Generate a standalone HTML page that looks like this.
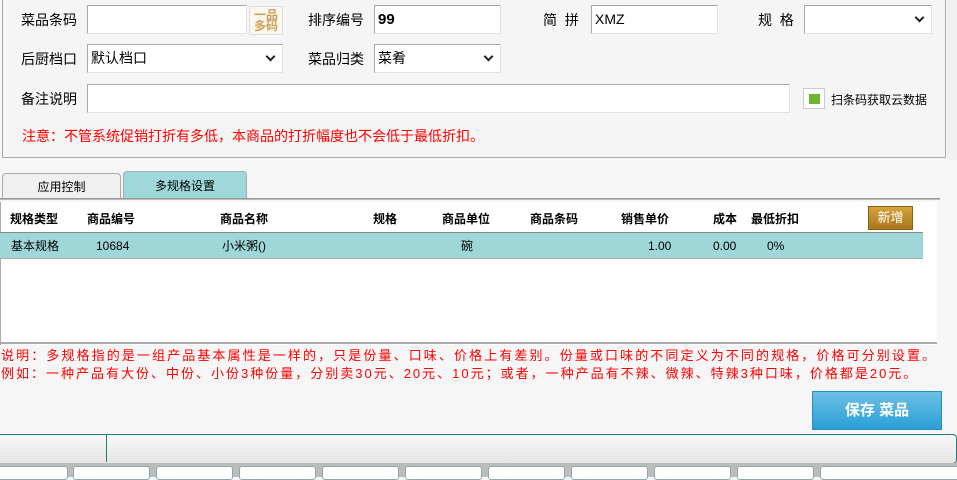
<!DOCTYPE html>
<html><head><meta charset="utf-8"><style>
*{margin:0;padding:0;box-sizing:border-box}
body{width:957px;height:477px;overflow:hidden;background:#f6f6f6;font-family:"Liberation Sans","Noto Sans CJK SC",sans-serif;font-size:14px;color:#000;position:relative}
.a{position:absolute}
.lbl{position:absolute;font-size:14px;line-height:16px}
.inp{position:absolute;background:#fff;border:1px solid #e2e2e2;border-top-color:#a8a8a8;border-left-color:#a8a8a8;height:29px;font-size:14px;line-height:27px;padding-left:3px}
.chev{position:absolute;right:8px;top:8px;width:7px;height:7px;border-right:2px solid #222;border-bottom:2px solid #222;transform:rotate(45deg)}
.th{position:absolute;top:212px;font-size:12px;font-weight:bold;line-height:14px}
.td{position:absolute;top:239px;font-size:12px;line-height:14px}
.red{position:absolute;color:#f00;font-size:13px;line-height:15px;white-space:nowrap}
.btn{position:absolute;top:466px;height:14px;background:#fff;border:1px solid #8aa;border-radius:3px}
</style></head><body>
<div class="a" style="left:2px;top:-2px;width:944px;height:160px;border:1px solid #a9a9a9;background:#f5f5f5"></div>
<div class="a" style="left:947px;top:0;width:10px;height:160px;background:#f0f0f0"></div>

<div class="lbl" style="left:21px;top:12px">菜品条码</div>
<div class="inp" style="left:87px;top:5px;width:160px"></div>
<div class="a" style="left:249px;top:6px;width:34px;height:29px;background:#fbf6ee;border:1px solid #ddd;color:#c9a15b;font-size:12px;line-height:11px;text-align:center;padding-top:3px;font-weight:bold">一品<br>多码</div>
<div class="lbl" style="left:308px;top:12px">排序编号</div>
<div class="inp" style="left:374px;top:5px;width:127px;font-weight:bold;font-size:15px">99</div>
<div class="lbl" style="left:543px;top:12px">简&nbsp;&nbsp;拼</div>
<div class="inp" style="left:591px;top:5px;width:127px">XMZ</div>
<div class="lbl" style="left:758px;top:12px">规&nbsp;&nbsp;格</div>
<div class="inp" style="left:804px;top:5px;width:128px"><div class="chev"></div></div>

<div class="lbl" style="left:21px;top:51px">后厨档口</div>
<div class="inp" style="left:87px;top:44px;width:196px">默认档口<div class="chev"></div></div>
<div class="lbl" style="left:308px;top:51px">菜品归类</div>
<div class="inp" style="left:374px;top:44px;width:127px">菜肴<div class="chev"></div></div>

<div class="lbl" style="left:21px;top:91px">备注说明</div>
<div class="inp" style="left:87px;top:84px;width:703px"></div>
<div class="a" style="left:803px;top:88px;width:22px;height:21px;border:1px solid #ccc;background:#fff"><div class="a" style="left:5px;top:5px;width:11px;height:10px;background:#6cb52c"></div></div>
<div class="lbl" style="left:831px;top:92px;font-size:12px">扫条码获取云数据</div>

<div class="red" style="left:22px;top:129px;font-size:14px">注意：不管系统促销打折有多低，本商品的打折幅度也不会低于最低折扣。</div>

<div class="a" style="left:2px;top:173px;width:119px;height:25px;border:1px solid #aaa;border-bottom:none;border-radius:4px 4px 0 0;background:#f0f0f0;font-size:12px;text-align:center;line-height:26px">应用控制</div>
<div class="a" style="left:123px;top:171px;width:124px;height:27px;border:1px solid #aaa;border-bottom:none;border-radius:4px 4px 0 0;background:#9fd8da;font-size:12px;text-align:center;line-height:28px">多规格设置</div>
<div class="a" style="left:0;top:198px;width:940px;height:2px;border-top:1px solid #999;border-bottom:1px solid #bbb"></div>
<div class="a" style="left:0;top:202px;width:937px;height:143px;background:#fff;border-left:1px solid #aaa"></div>
<div class="a" style="left:0;top:232px;width:923px;height:1px;background:#888"></div>
<div class="a" style="left:0;top:233px;width:923px;height:26px;background:#9fd7d8;border-bottom:1px solid #aaa"></div>
<div class="a" style="left:0;top:342px;width:937px;height:2px;background:#aaa"></div>

<div class="th" style="left:10px">规格类型</div>
<div class="th" style="left:87px">商品编号</div>
<div class="th" style="left:220px">商品名称</div>
<div class="th" style="left:373px">规格</div>
<div class="th" style="left:442px">商品单位</div>
<div class="th" style="left:530px">商品条码</div>
<div class="th" style="left:621px">销售单价</div>
<div class="th" style="left:713px">成本</div>
<div class="th" style="left:751px">最低折扣</div>
<div class="a" style="left:868px;top:206px;width:45px;height:24px;background:linear-gradient(#d6a43a,#a8761b);border:1px solid #8a6010;color:#fff;font-size:13px;text-align:center;line-height:22px">新增</div>

<div class="td" style="left:11px">基本规格</div>
<div class="td" style="left:96px">10684</div>
<div class="td" style="left:222px">小米粥()</div>
<div class="td" style="left:461px">碗</div>
<div class="td" style="left:648px">1.00</div>
<div class="td" style="left:713px">0.00</div>
<div class="td" style="left:767px">0%</div>

<div class="red" style="left:1px;top:348px;letter-spacing:2.1px">说明：多规格指的是一组产品基本属性是一样的，只是份量、口味、价格上有差别。份量或口味的不同定义为不同的规格，价格可分别设置。</div>
<div class="red" style="left:1px;top:366px;letter-spacing:2px">例如：一种产品有大份、中份、小份3种份量，分别卖30元、20元、10元；或者，一种产品有不辣、微辣、特辣3种口味，价格都是20元。</div>

<div class="a" style="left:812px;top:391px;width:130px;height:39px;background:linear-gradient(#6cc0e6,#2a9fd6);border:1px solid #2a8cc0;color:#fff;font-size:15px;font-weight:bold;text-align:center;line-height:37px">保存 菜品</div>

<div class="a" style="left:-4px;top:434px;width:961px;height:30px;border:1px solid #1f7f78;border-radius:4px;background:linear-gradient(#f7f7f7,#e6e6e6)"></div>
<div class="a" style="left:106px;top:435px;width:1px;height:27px;background:#1f7f78"></div>
<div class="a" style="left:0;top:463px;width:957px;height:14px;background:#bcbcbc"></div>
<div class="btn" style="left:-4px;width:72px"></div>
<div class="btn" style="left:73px;width:77px"></div>
<div class="btn" style="left:156px;width:77px"></div>
<div class="btn" style="left:239px;width:77px"></div>
<div class="btn" style="left:322px;width:77px"></div>
<div class="btn" style="left:405px;width:77px"></div>
<div class="btn" style="left:488px;width:77px"></div>
<div class="btn" style="left:571px;width:77px"></div>
<div class="btn" style="left:654px;width:77px"></div>
<div class="btn" style="left:737px;width:77px"></div>
<div class="btn" style="left:820px;width:140px"></div>
</body></html>
